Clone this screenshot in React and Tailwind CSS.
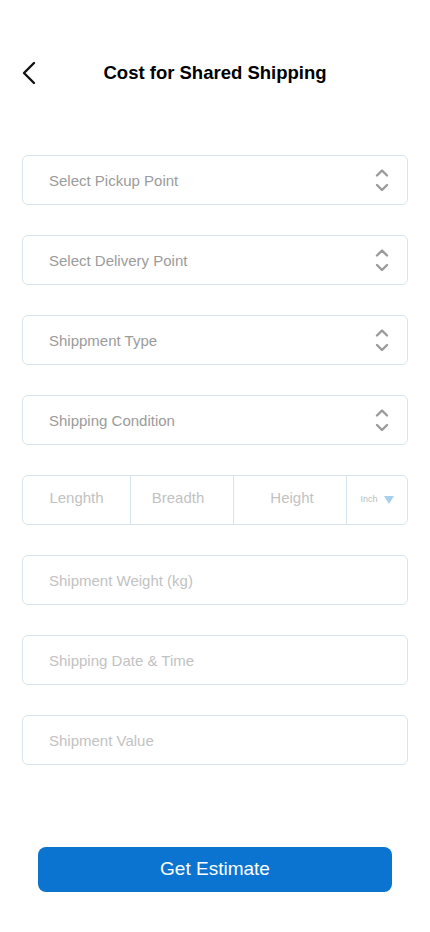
const font = { fontFamily: 'Helvetica, "Liberation Sans", Arial, sans-serif' };

function UpDown() {
    return (
        <svg width="14" height="30" viewBox="0 0 14 30" fill="none" stroke="#9a9a9a" strokeWidth="2.4" strokeLinecap="round" strokeLinejoin="round">
            <path d="M2 10.5 L7 5.5 L12 10.5" />
            <path d="M2 20 L7 25 L12 20" />
        </svg>
    );
}

function SelectBox({ label }) {
    return (
        <div className="h-[50px] rounded-md border border-[#d6e4ee] flex items-center justify-between pl-[26px] pr-[18px]">
            <span className="text-[15px] text-[#9b9b9b] translate-y-[1px]">{label}</span>
            <UpDown />
        </div>
    );
}

function InputBox({ label }) {
    return (
        <div className="h-[50px] rounded-md border border-[#d6e4ee] flex items-center pl-[26px]">
            <span className="text-[15px] text-[#c2c2c2] translate-y-[1px]">{label}</span>
        </div>
    );
}

export default function App() {
    return (
        <div className="w-[430px] h-[932px] bg-white flex flex-col" style={font}>
            <header className="relative h-[60px] mt-[43px] flex items-center justify-center">
                <svg className="absolute left-[20px] top-[18px]" width="18" height="24" viewBox="0 0 18 24" fill="none" stroke="#111" strokeWidth="2.4" strokeLinecap="round" strokeLinejoin="round">
                    <path d="M14 2 L4 12 L14 22" />
                </svg>
                <h1 className="text-[18.5px] font-bold text-black">Cost for Shared Shipping</h1>
            </header>

            <div className="px-[22px] mt-[52px] flex flex-col gap-[30px]">
                <SelectBox label="Select Pickup Point" />
                <SelectBox label="Select Delivery Point" />
                <SelectBox label="Shippment Type" />
                <SelectBox label="Shipping Condition" />

                <div className="h-[50px] rounded-md border border-[#d6e4ee] flex text-[15px] text-[#c2c2c2]">
                    <div className="w-[108px] flex items-center justify-center pb-[3px] border-r border-[#d6e4ee]">Lenghth</div>
                    <div className="w-[103px] flex items-center justify-center pb-[3px] pr-[8px] border-r border-[#d6e4ee]">Breadth</div>
                    <div className="w-[113px] flex items-center justify-center pb-[3px] pl-[4px] border-r border-[#d6e4ee]">Height</div>
                    <div className="flex-1 flex items-center justify-center gap-[6px]">
                        <span className="text-[9px] text-[#bbbbbb]">Inch</span>
                        <svg width="10" height="8" viewBox="0 0 10 8"><path d="M0 0 H10 L5 8 Z" fill="#a9cfee" /></svg>
                    </div>
                </div>

                <InputBox label="Shipment Weight (kg)" />
                <InputBox label="Shipping Date & Time" />
                <InputBox label="Shipment Value" />
            </div>

            <div className="px-[38px] mt-[82px]">
                <button className="w-full h-[45px] rounded-lg bg-[#0b74d1] text-white text-[19px]">Get Estimate</button>
            </div>
        </div>
    );
}
